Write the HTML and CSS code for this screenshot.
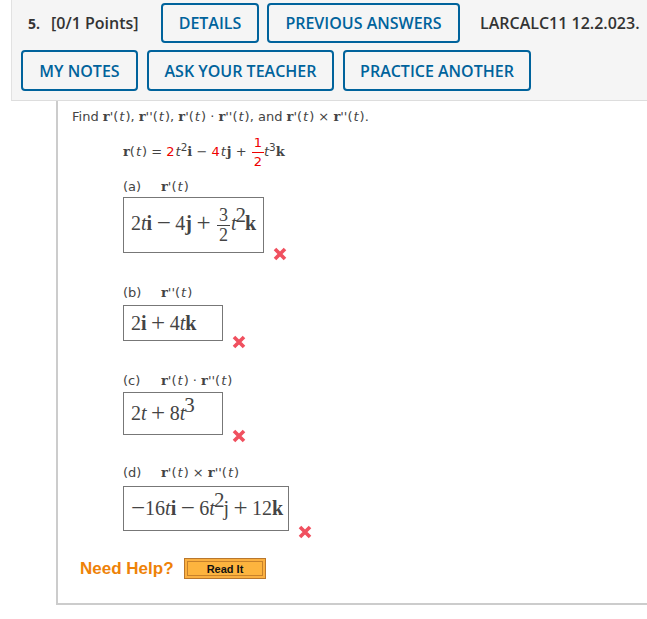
FILE: index.html
```html
<!DOCTYPE html>
<html lang="en">
<head>
    <meta charset="UTF-8">
    <meta name="viewport" content="width=device-width, initial-scale=1.0">
    <title>Question 5</title>
    <link rel="stylesheet" href="styles.css">
</head>
<body>

    <div class="header">
        <div class="header-row">
            <span class="q-num">5.</span>
            <span class="q-points">[0/1 Points]</span>
            <button class="btn btn-details">DETAILS</button>
            <button class="btn btn-previous">PREVIOUS ANSWERS</button>
            <span class="q-code">LARCALC11 12.2.023.</span>
        </div>
        <div class="header-row second">
            <button class="btn btn-notes">MY NOTES</button>
            <button class="btn btn-ask">ASK YOUR TEACHER</button>
            <button class="btn btn-practice">PRACTICE ANOTHER</button>
        </div>
    </div>

    <div class="question">
        <p class="find">Find <b>r</b>'(<i>t</i>), <b>r</b>''(<i>t</i>), <b>r</b>'(<i>t</i>) &middot; <b>r</b>''(<i>t</i>), and <b>r</b>'(<i>t</i>) &times; <b>r</b>''(<i>t</i>).</p>

        <div class="given">
            <b>r</b>(<i>t</i>) = <span class="red">2</span><i>t</i><sup>2</sup><b>i</b> &minus; <span class="red">4</span><i>t</i><b>j</b> + <span class="frac red"><span class="top">1</span><span>2</span></span><i>t</i><sup>3</sup><b>k</b>
        </div>

        <div class="part part-a">
            <div class="label"><span class="letter">(a)</span><span><b>r</b>'(<i>t</i>)</span></div>
            <div class="answer-row">
                <div class="answer box-a"><span class="math">2<i>t</i><b>i</b> <span class="op">&minus;</span> 4<b>j</b> <span class="op">+</span> <span class="frac big"><span class="top">3</span><span>2</span></span><i>t</i><sup>2</sup><b>k</b></span></div>
                <svg class="cross" viewBox="0 0 14 14"><path d="M2 2 L12 12 M12 2 L2 12"/></svg>
            </div>
        </div>

        <div class="part part-b">
            <div class="label"><span class="letter">(b)</span><span><b>r</b>''(<i>t</i>)</span></div>
            <div class="answer-row">
                <div class="answer box-b"><span class="math">2<b>i</b> <span class="op">+</span> 4<i>t</i><b>k</b></span></div>
                <svg class="cross" viewBox="0 0 14 14"><path d="M2 2 L12 12 M12 2 L2 12"/></svg>
            </div>
        </div>

        <div class="part part-c">
            <div class="label"><span class="letter">(c)</span><span><b>r</b>'(<i>t</i>) &middot; <b>r</b>''(<i>t</i>)</span></div>
            <div class="answer-row">
                <div class="answer box-c"><span class="math">2<i>t</i> <span class="op">+</span> 8<i>t</i><sup>3</sup></span></div>
                <svg class="cross" viewBox="0 0 14 14"><path d="M2 2 L12 12 M12 2 L2 12"/></svg>
            </div>
        </div>

        <div class="part part-d">
            <div class="label"><span class="letter">(d)</span><span><b>r</b>'(<i>t</i>) &times; <b>r</b>''(<i>t</i>)</span></div>
            <div class="answer-row">
                <div class="answer box-d"><span class="math"><span class="op">&minus;</span>16<i>t</i><b>i</b> <span class="op">&minus;</span> 6<i>t</i><sup>2</sup>j <span class="op">+</span> 12<b>k</b></span></div>
                <svg class="cross" viewBox="0 0 14 14"><path d="M2 2 L12 12 M12 2 L2 12"/></svg>
            </div>
        </div>

        <div class="help">
            <span class="need">Need Help?</span>
            <span class="read-wrap"><span class="read">Read It</span></span>
        </div>
    </div>

</body>
</html>
```

FILE: styles.css
```css
body {
    margin: 0;
    height: 619px;
    overflow: hidden;
    background-color: #fff;
    font-family: "DejaVu Sans", sans-serif;
    color: #444;
}

/* --- Header --- */
.header {
    margin-left: 11px;
    height: 101px;
    box-sizing: border-box;
    padding: 3px 0 0 9px;
    background-color: #f5f5f5;
    border-left: 1px solid #e2e2e2;
    border-bottom: 1px solid #ddd;
    white-space: nowrap;
    font-family: "Open Sans", sans-serif;
}

.header-row {
    display: flex;
    align-items: center;
    height: 40px;
}

.header-row.second {
    margin-top: 7px;
    height: 41px;
}

.q-num {
    margin-left: 7px;
    width: 23px;
    font-size: 14px;
    font-weight: 700;
    color: #333;
}

.q-points {
    width: 110px;
    font-size: 16px;
    font-weight: 600;
    color: #333;
}

.q-code {
    margin-left: 20px;
    font-size: 16px;
    font-weight: 600;
    color: #333;
}

.btn {
    box-sizing: border-box;
    height: 100%;
    padding: 0;
    background: #f5f5f5;
    border: 2px solid #00639c;
    border-radius: 4px;
    color: #00639c;
    font-family: "Open Sans", sans-serif;
    font-size: 16px;
    font-weight: 600;
}

.btn-details { width: 98px; }
.btn-previous { width: 193px; margin-left: 8px; }
.btn-notes { width: 117px; }
.btn-ask { width: 187px; margin-left: 9px; }
.btn-practice { width: 188px; margin-left: 9px; }

/* --- Question body --- */
.question {
    margin-left: 56px;
    height: 504px;
    box-sizing: border-box;
    padding: 8px 0 0 14px;
    border-left: 2px solid #ccc;
    border-bottom: 2px solid #ccc;
    font-size: 13px;
}

.question b {
    font-family: "DejaVu Serif", serif;
}

.question i {
    padding: 0 1px;
}

.find {
    margin: 0;
    height: 16px;
    line-height: 16px;
}

.given {
    margin: 9px 0 0 51px;
    height: 32px;
    line-height: 32px;
    white-space: nowrap;
}

.given .frac {
    line-height: 18px;
    margin: 0 0 0 1px;
}

.given .frac + i {
    padding: 0 1px 0 0;
}

.given sup {
    margin-left: -1px;
}

.red {
    color: #e00;
}

sup {
    font-size: 0.8em;
    line-height: 0;
}

.frac {
    display: inline-flex;
    flex-direction: column;
    align-items: center;
    vertical-align: middle;
    line-height: 16px;
    margin: 0 1px;
}

.frac .top {
    border-bottom: 1px solid currentColor;
    padding: 0 2px;
}

.part {
    margin-left: 51px;
}

.part-a { margin-top: 13px; }
.part-b { margin-top: 32px; }
.part-c { margin-top: 32px; }
.part-d { margin-top: 30px; }

.label {
    display: flex;
    height: 16px;
    line-height: 16px;
    gap: 18px;
    margin-bottom: 2px;
}

.part-b .label { margin-bottom: 4px; }
.part-c .label { margin-bottom: 3px; }
.part-d .label { margin-bottom: 5px; }

.letter {
    width: 20px;
}

.answer-row {
    display: flex;
    align-items: flex-end;
}

.answer {
    box-sizing: border-box;
    display: flex;
    align-items: center;
    padding-left: 7px;
    border: 1px solid #777;
    background-color: #fff;
    color: #444;
    font-family: "Liberation Serif", serif;
    font-size: 20px;
}

.math {
    white-space: nowrap;
    word-spacing: -0.5px;
}

.answer b {
    font-family: "Liberation Serif", serif;
}

.answer i {
    padding: 0;
}

.answer sup {
    font-size: 21px;
    margin: 0 -1px 0 -1px;
    vertical-align: 8px;
}

/* operators are a bit wider than the serif glyphs */
.op {
    font-size: 25px;
    line-height: 20px;
    vertical-align: -1px;
}

.frac.big {
    font-size: 18px;
    line-height: 19px;
    margin: 0 1px 0 2px;
}

.box-a { width: 141px; height: 56px; }
.box-b { width: 100px; height: 36px; }
.box-c { width: 100px; height: 43px; }
.box-d { width: 166px; height: 45px; }

.cross {
    width: 14px;
    height: 14px;
    margin: 0 0 -8px 9px;
    fill: none;
    stroke: #f0505f;
    stroke-width: 3.6;
}

/* --- Need help --- */
.help {
    display: flex;
    align-items: center;
    margin-top: 27px;
    margin-left: 8px;
}

.need {
    width: 104px;
    font-family: "Liberation Sans", sans-serif;
    font-size: 17px;
    font-weight: 700;
    color: #ee8208;
}

.read-wrap {
    box-sizing: border-box;
    width: 82px;
    height: 21px;
    padding: 2px;
    background-color: #fbb040;
    border: 1px solid #b9772c;
}

.read {
    display: block;
    height: 15px;
    line-height: 14px;
    box-sizing: border-box;
    text-align: center;
    background-color: #fdb43e;
    border: 1px solid #c8822b;
    font-family: "Liberation Sans", sans-serif;
    font-size: 11px;
    font-weight: 700;
    color: #111;
}
```
